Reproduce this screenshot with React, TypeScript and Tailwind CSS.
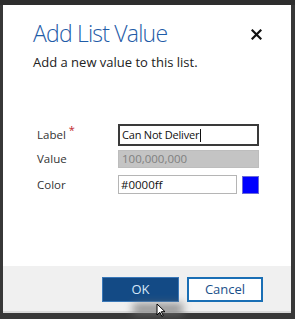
export default function App() {
  return (
    <div className="relative w-[295px] h-[319px] bg-[#383838] overflow-hidden" style={{ fontFamily: '"Open Sans", "Noto Sans", sans-serif' }}>
      <div className="h-[5px] bg-[#2e2e2e]" />
      <div className="ml-[3px] w-[288px] h-[308px] bg-white flex flex-col border-b-2 border-[#d9d9d9]">
        <div className="relative px-[30px] pt-[13px]">
          <h1 className="text-[23px] leading-[30px] font-light text-[#1f5ca8] tracking-[-0.8px]">Add List Value</h1>
          <p className="mt-[6px] text-[13px] leading-[16px] text-[#222]">Add a new value to this list.</p>
          <button className="absolute right-[29px] top-[24px] text-[#111]">
            <svg width="11" height="11" viewBox="0 0 11 11">
              <path d="M1.5 1.5 L9.5 9.5 M9.5 1.5 L1.5 9.5" stroke="currentColor" strokeWidth="2.2" strokeLinecap="square" />
            </svg>
          </button>
        </div>

        <div className="mt-[54px] pl-[34px] flex flex-col text-[11.5px] text-[#333]">
          <div className="flex items-center h-[22px]">
            <span className="w-[81px] flex items-start">
              Label<span className="ml-[3px] -mt-[4px] text-[#c0262c] text-[11px]">*</span>
            </span>
            <div className="w-[141px] h-[22px] border-2 border-[#3a3a3a] px-[2px] flex items-center text-[11px] font-medium text-[#111] tracking-[-0.2px]">
              Can Not Deliver<span className="w-px h-[13px] bg-[#111] ml-px" />
            </div>
          </div>
          <div className="flex items-center h-[18px] mt-[4px]">
            <span className="w-[81px]">Value</span>
            <div className="w-[141px] h-[18px] border border-[#bdbdbd] bg-[#c4c4c4] px-[3px] flex items-center text-[11.5px] text-[#808080]">
              100,000,000
            </div>
          </div>
          <div className="flex items-center h-[19px] mt-[7px]">
            <span className="w-[81px]">Color</span>
            <div className="w-[119px] h-[19px] border border-[#b5b5b5] px-[2px] flex items-center text-[11.5px] text-[#111]">
              #0000ff
            </div>
            <div className="ml-[5px] w-[17px] h-[18px] bg-[#0000ff] border border-[#6b6bd8]" />
          </div>
        </div>

        <div className="flex-1" />

        <div className="h-[45px] bg-[#f0f0f0] flex justify-end items-start pt-[11px] pr-[28px] gap-[8px]">
          <button className="w-[77px] h-[25px] bg-[#134a85] border border-[#3a78b8] text-[#d6e6f8] text-[13px]">OK</button>
          <button className="w-[76px] h-[25px] bg-white border-2 border-[#1a6fb5] text-[#1a4f8a] text-[13px]">Cancel</button>
        </div>
      </div>
      <div className="absolute left-[133px] top-[303px] w-[50px] h-[12px] bg-[#707070] blur-[4px] opacity-70" />
      <svg className="absolute left-[156px] top-[303px]" width="10" height="14" viewBox="0 0 10 14">
        <path d="M1 1 L1 12 L3.8 9.3 L5.8 13.3 L7.3 12.6 L5.3 8.7 L9 8.7 Z" fill="white" stroke="black" strokeWidth="1" />
      </svg>
    </div>
  );
}
